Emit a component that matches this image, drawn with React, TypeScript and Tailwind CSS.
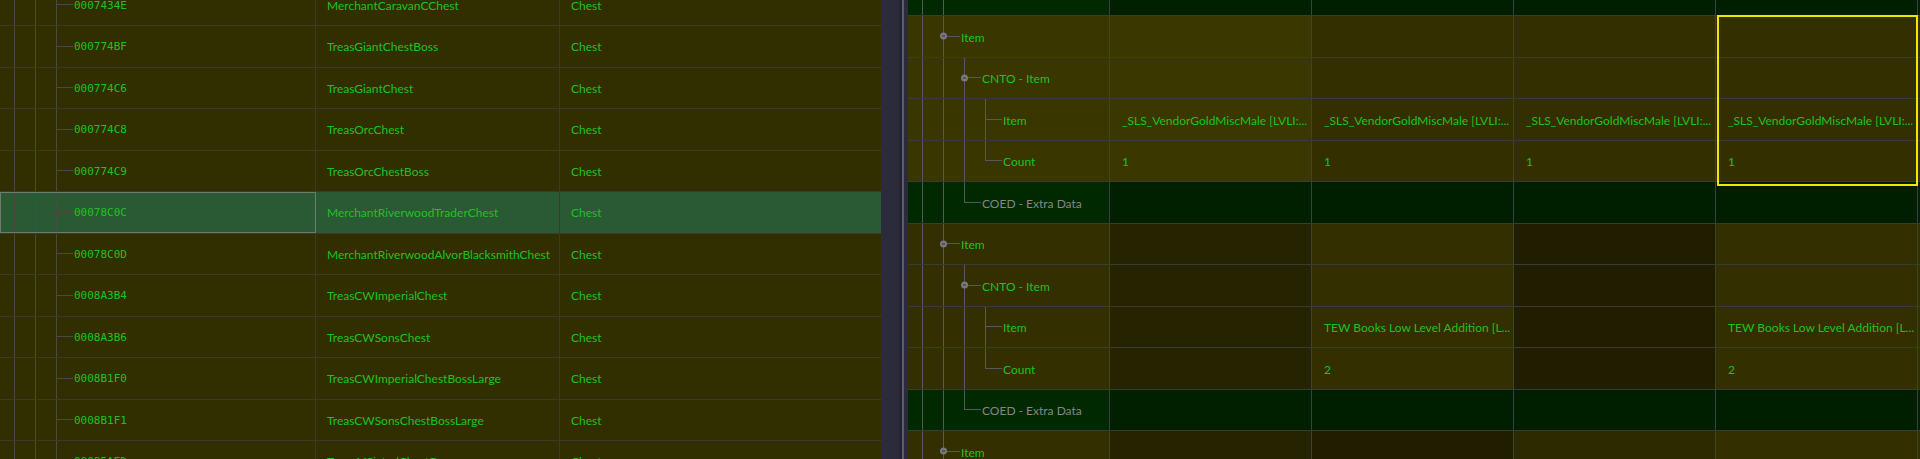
import React from "react";

const sans = "font-['Lato',sans-serif] text-[12px]";

// tree guide pieces
const Pass = ({ c }: { c: string }) => <div className={`w-[21px] shrink-0 self-stretch border-l ${c}`} />;

const Tee = ({ c, end }: { c: string; end?: boolean }) => (
  <div className="w-[17px] shrink-0 self-stretch flex flex-col">
    <div className={`flex-1 border-l border-b ${c}`} />
    <div className={end ? "flex-1" : `flex-1 border-l ${c}`} />
  </div>
);

const BtnTee = ({ c }: { c: string }) => (
  <div className="relative w-[17px] shrink-0 self-stretch flex flex-col">
    <div className={`flex-1 border-l border-b ${c}`} />
    <div className={`flex-1 border-l ${c}`} />
    <div className="absolute left-[-3px] top-1/2 -translate-y-1/2 w-[7px] h-[7px] rounded-full bg-[#77777f] flex items-center justify-center">
      <div className="w-[3px] h-px bg-[#33333a]" />
    </div>
  </div>
);

const leftRows = [
  ["0007434E", "MerchantCaravanCChest"],
  ["000774BF", "TreasGiantChestBoss"],
  ["000774C6", "TreasGiantChest"],
  ["000774C8", "TreasOrcChest"],
  ["000774C9", "TreasOrcChestBoss"],
  ["00078C0C", "MerchantRiverwoodTraderChest"],
  ["00078C0D", "MerchantRiverwoodAlvorBlacksmithChest"],
  ["0008A3B4", "TreasCWImperialChest"],
  ["0008A3B6", "TreasCWSonsChest"],
  ["0008B1F0", "TreasCWImperialChestBossLarge"],
  ["0008B1F1", "TreasCWSonsChestBossLarge"],
  ["00085AED", "TreasAfflictedChestBoss"],
];

function LeftPanel() {
  const line = "border-[#4a4a44]";
  return (
    <div className="w-[881px] shrink-0 h-full overflow-hidden bg-[#312e00]">
      <div className="mt-[-15.5px]">
        {leftRows.map(([id, name]) => {
          const sel = id === "00078C0C";
          return (
            <div
              key={id}
              className={`flex h-[41.5px] border-b border-[#3b3a2c] ${sel ? "bg-[#2a5a33]" : "bg-[#312e00]"}`}
            >
              <div
                className={`w-[316px] shrink-0 flex pl-[14px] border-r border-[#3b3a2c] ${sel ? "outline outline-1 -outline-offset-1 outline-[#6d7d6d]" : ""}`}
              >
                <Pass c={line} />
                <Pass c={line} />
                <Tee c={line} />
                <span className="self-center pl-px pt-[2px] font-['DejaVu_Sans_Mono',monospace] text-[11px] text-[#1ec21e]">{id}</span>
              </div>
              <div className={`w-[244px] shrink-0 flex items-center pl-[11px] pt-[2px] border-r border-[#3b3a2c] ${sans} text-[#1ec21e]`}>
                {name}
              </div>
              <div className={`flex-1 flex items-center pl-[11px] pt-[2px] ${sans} text-[#1ec21e]`}>Chest</div>
            </div>
          );
        })}
      </div>
    </div>
  );
}

function Splitter() {
  return (
    <div className="flex shrink-0 h-full">
      <div className="w-[18px] bg-[#2c2b3b]" />
      <div className="w-[3px] bg-[#252432]" />
      <div className="w-[2px] bg-[#5c5b6e]" />
      <div className="w-[4px] bg-[#2c2b3b]" />
    </div>
  );
}

type Kind = "item" | "cnto" | "leaf" | "count" | "coed";

interface RRow {
  kind: Kind;
  label: string;
  tree: string;
  cells: { bg: string; text?: string }[];
}

const SLS = "_SLS_VendorGoldMiscMale [LVLI:...";
const TEW = "TEW Books Low Level Addition [L...";

const coedRow: RRow = {
  kind: "coed",
  label: "COED - Extra Data",
  tree: "bg-[#002900]",
  cells: [{ bg: "bg-[#002000]" }, { bg: "bg-[#001e00]" }, { bg: "bg-[#001e00]" }, { bg: "bg-[#001e00]" }],
};

const rightRows: RRow[] = [
  coedRow,
  { kind: "item", label: "Item", tree: "bg-[#393600]", cells: [{ bg: "bg-[#3a3700]" }, { bg: "bg-[#332f00]" }, { bg: "bg-[#332f00]" }, { bg: "bg-[#332f00]" }] },
  { kind: "cnto", label: "CNTO - Item", tree: "bg-[#393600]", cells: [{ bg: "bg-[#3a3700]" }, { bg: "bg-[#332f00]" }, { bg: "bg-[#332f00]" }, { bg: "bg-[#332f00]" }] },
  {
    kind: "leaf",
    label: "Item",
    tree: "bg-[#393600]",
    cells: [
      { bg: "bg-[#3a3700]", text: SLS },
      { bg: "bg-[#332f00]", text: SLS },
      { bg: "bg-[#332f00]", text: SLS },
      { bg: "bg-[#332f00]", text: SLS },
    ],
  },
  {
    kind: "count",
    label: "Count",
    tree: "bg-[#393600]",
    cells: [
      { bg: "bg-[#3a3700]", text: "1" },
      { bg: "bg-[#332f00]", text: "1" },
      { bg: "bg-[#332f00]", text: "1" },
      { bg: "bg-[#332f00]", text: "1" },
    ],
  },
  coedRow,
  { kind: "item", label: "Item", tree: "bg-[#332f00]", cells: [{ bg: "bg-[#262300]" }, { bg: "bg-[#332f00]" }, { bg: "bg-[#211e00]" }, { bg: "bg-[#332f00]" }] },
  { kind: "cnto", label: "CNTO - Item", tree: "bg-[#332f00]", cells: [{ bg: "bg-[#262300]" }, { bg: "bg-[#332f00]" }, { bg: "bg-[#211e00]" }, { bg: "bg-[#332f00]" }] },
  {
    kind: "leaf",
    label: "Item",
    tree: "bg-[#332f00]",
    cells: [{ bg: "bg-[#262300]" }, { bg: "bg-[#332f00]", text: TEW }, { bg: "bg-[#211e00]" }, { bg: "bg-[#332f00]", text: TEW }],
  },
  {
    kind: "count",
    label: "Count",
    tree: "bg-[#332f00]",
    cells: [{ bg: "bg-[#262300]" }, { bg: "bg-[#332f00]", text: "2" }, { bg: "bg-[#211e00]" }, { bg: "bg-[#332f00]", text: "2" }],
  },
  coedRow,
  { kind: "item", label: "Item", tree: "bg-[#332f00]", cells: [{ bg: "bg-[#262300]" }, { bg: "bg-[#211e00]" }, { bg: "bg-[#2d2a00]" }, { bg: "bg-[#332f00]" }] },
];

function TreeGuides({ kind }: { kind: Kind }) {
  const c = "border-[#58585a]";
  if (kind === "item")
    return (
      <>
        <Pass c={c} />
        <BtnTee c={c} />
      </>
    );
  if (kind === "cnto")
    return (
      <>
        <Pass c={c} />
        <Pass c={c} />
        <BtnTee c={c} />
      </>
    );
  if (kind === "leaf" || kind === "count")
    return (
      <>
        <Pass c={c} />
        <Pass c={c} />
        <Pass c={c} />
        <Tee c={c} end={kind === "count"} />
      </>
    );
  return (
    <>
      <Pass c={c} />
      <Pass c={c} />
      <Tee c={c} end />
    </>
  );
}

function RightPanel() {
  return (
    <div className="flex-1 h-full overflow-hidden bg-[#332f00] relative">
      <div className="mt-[-25.5px]">
        {rightRows.map((r, i) => (
          <div key={i} className="flex h-[41.5px] border-b border-[#3a3a36]">
            <div className={`w-[202px] shrink-0 flex pl-[14px] border-r border-[#3b3f47] ${r.tree}`}>
              <TreeGuides kind={r.kind} />
              <span
                className={`self-center pl-px pt-[3px] whitespace-nowrap ${sans} ${r.kind === "coed" ? "text-[#868686]" : "text-[#1ec21e]"}`}
              >
                {r.label}
              </span>
            </div>
            {r.cells.map((cell, j) => (
              <div
                key={j}
                className={`w-[202px] shrink-0 flex items-center px-[12px] pt-[3px] border-r border-[#3b3f47] overflow-hidden whitespace-nowrap ${sans} text-[#1ec21e] ${cell.bg}`}
              >
                {cell.text}
              </div>
            ))}
            <div className={`flex-1 ${r.cells[3].bg}`} />
          </div>
        ))}
      </div>
      {/* focused cell */}
      <div className="absolute left-[809px] top-[14.5px] w-[201px] h-[171px] border-2 border-[#f2e600] pointer-events-none" />
    </div>
  );
}

export default function App() {
  return (
    <div className="w-[1920px] h-[459px] flex overflow-hidden bg-[#312e00]">
      <LeftPanel />
      <Splitter />
      <RightPanel />
    </div>
  );
}
